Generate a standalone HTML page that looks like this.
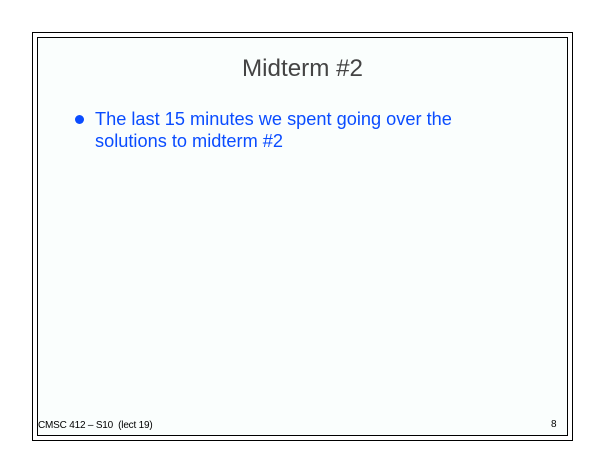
<!DOCTYPE html>
<html><head><style>
html,body{margin:0;padding:0;background:#fff;width:605px;height:468px;overflow:hidden;font-family:"Liberation Sans",sans-serif}
.o{position:absolute;left:32px;top:32px;width:539px;height:407px;border:1.5px solid #000}
.i{position:absolute;left:37px;top:37px;width:529px;height:397px;border:1.5px solid #000;background:#fafefd}
.t{position:absolute;left:0;width:605px;top:55px;text-align:center;font-size:24.2px;color:#444}
.b{position:absolute;left:95px;top:108px;font-size:18.2px;line-height:22px;color:#0a4cff}
.d{position:absolute;left:75px;top:115px;width:9px;height:9px;border-radius:50%;background:#0a4cff}
.f{position:absolute;left:38px;top:420px;font-size:10px;color:#000;letter-spacing:-0.2px}
.n{position:absolute;left:551px;top:419px;font-size:10px}
</style></head><body>
<div class="o"></div><div class="i"></div>
<div class="t">Midterm #2</div>
<div class="d"></div>
<div class="b">The last 15 minutes we spent going over the<br>solutions to midterm #2</div>
<div class="f">CMSC 412 – S10 &nbsp;(lect 19)</div>
<div class="n">8</div>
</body></html>
